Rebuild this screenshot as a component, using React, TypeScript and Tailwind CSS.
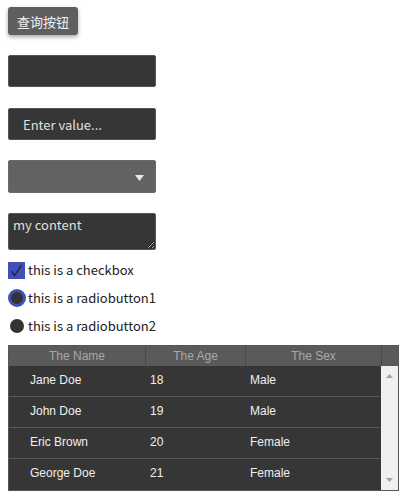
import { useState } from 'react'

interface Person {
  name: string
  age: number
  sex: string
}

const people: Person[] = [
  { name: 'Jane Doe', age: 18, sex: 'Male' },
  { name: 'John Doe', age: 19, sex: 'Male' },
  { name: 'Eric Brown', age: 20, sex: 'Female' },
  { name: 'George Doe', age: 21, sex: 'Female' },
]

export default function App() {
  const [text, setText] = useState('my content')
  const [checked, setChecked] = useState(true)
  const [radio, setRadio] = useState(1)

  return (
    <div className="min-h-screen bg-white pl-2 pt-[7px] font-['Noto_Sans_CJK_SC','Noto_Sans',sans-serif]">
      {/* query button */}
      <button className="h-[28px] w-[70px] rounded-[3px] bg-[#5f5f5f] text-[13px] leading-none text-[#f0f0f0] shadow-[0_2px_4px_rgba(0,0,0,0.35)]">
        查询按钮
      </button>

      {/* text fields */}
      <input className="mt-[20px] block h-[32px] w-[148px] rounded-[2px] border border-[#555] bg-[#363636] px-[14px] text-[13px] text-[#ddd] outline-none" />
      <input
        placeholder="Enter value..."
        className="mt-[21px] block h-[32px] w-[148px] rounded-[2px] border border-[#555] bg-[#363636] px-[14px] text-[13px] text-[#ddd] outline-none placeholder:text-[#e0e0e0]"
      />

      {/* select */}
      <div className="relative mt-[20px] h-[33px] w-[148px] rounded-[2px] border border-[#6a6a6a] bg-[#626262]">
        <svg className="absolute right-[11px] top-[14px]" width="9" height="6" viewBox="0 0 9 6">
          <path d="M0 0 L9 0 L4.5 6 Z" fill="#e8e8e8" />
        </svg>
      </div>

      {/* textarea */}
      <textarea
        value={text}
        onChange={(e) => setText(e.target.value)}
        className="mt-[20px] block h-[37px] w-[148px] rounded-[2px] border border-[#555] bg-[#363636] px-[4px] py-0 text-[13px] leading-[22px] text-[#e0e0e0] outline-none"
      />

      {/* checkbox + radios */}
      <div className="mt-[12px] flex h-[16px] items-center gap-[3px] text-[13px] text-[#222]" onClick={() => setChecked(!checked)}>
        <span className="flex h-[17px] w-[17px] items-center justify-center bg-[#3f51b5]">
          {checked && (
            <svg width="13" height="13" viewBox="0 0 13 13">
              <path d="M1.5 7 L4.5 11.5 L11.5 1" stroke="#2a1a3a" strokeWidth="1.3" fill="none" />
            </svg>
          )}
        </span>
        <span>this is a checkbox</span>
      </div>

      <div className="mt-[12px] flex h-[16px] items-center gap-[2px] text-[13px] text-[#222]" onClick={() => setRadio(1)}>
        <span className={`block rounded-full ${radio === 1 ? 'h-[18px] w-[18px] border-[3px] border-[#3f51b5] bg-[#333]' : 'ml-[2px] mr-[2px] h-[14px] w-[14px] bg-[#333]'}`} />
        <span>this is a radiobutton1</span>
      </div>

      <div className="mt-[12px] flex h-[16px] items-center gap-[2px] text-[13px] text-[#222]" onClick={() => setRadio(2)}>
        <span className={`block rounded-full ${radio === 2 ? 'h-[18px] w-[18px] border-[3px] border-[#3f51b5] bg-[#333]' : 'ml-[2px] mr-[2px] h-[14px] w-[14px] bg-[#333]'}`} />
        <span>this is a radiobutton2</span>
      </div>

      {/* data table */}
      <div className="mt-[11px] w-[391px] border border-[#555] font-['Liberation_Sans',Arial,sans-serif] text-[12px]">
        <div className="grid h-[20px] grid-cols-[137px_100px_136px_1fr] bg-[#5a5a5a] text-[#a8a8a8]">
          <div className="flex items-center justify-center border-r border-[#4a4a4a]">The Name</div>
          <div className="flex items-center justify-center border-r border-[#4a4a4a]">The Age</div>
          <div className="flex items-center justify-center border-r border-[#4a4a4a]">The Sex</div>
          <div />
        </div>
        <div className="flex">
          <div className="flex-1 bg-[#363636] text-[#f0f0f0]">
            {people.map((p, i) => (
              <div
                key={p.name}
                className={`grid h-[31px] grid-cols-[137px_100px_1fr] items-center pb-[3px] ${i < people.length - 1 ? 'border-b border-[#555]' : ''}`}
              >
                <div className="pl-[21px]">{p.name}</div>
                <div className="pl-[4px]">{p.age}</div>
                <div className="pl-[4px]">{p.sex}</div>
              </div>
            ))}
          </div>
          <div className="flex w-[17px] flex-col items-center justify-between bg-[#f0f0f0] py-[8px]">
            <svg width="7" height="4" viewBox="0 0 7 4">
              <path d="M0 4 L7 4 L3.5 0 Z" fill="#a3a3a3" />
            </svg>
            <svg width="7" height="4" viewBox="0 0 7 4">
              <path d="M0 0 L7 0 L3.5 4 Z" fill="#a3a3a3" />
            </svg>
          </div>
        </div>
      </div>
    </div>
  )
}
